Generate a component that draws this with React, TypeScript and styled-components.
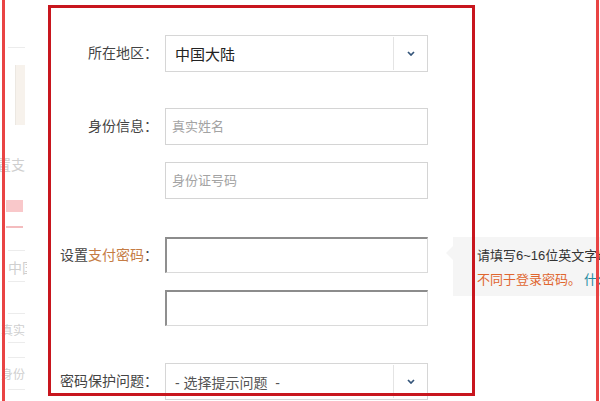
import styled, { createGlobalStyle } from "styled-components";

const GlobalStyle = createGlobalStyle`
  html, body {
    margin: 0;
    padding: 0;
    background: #fff;
  }
  body {
    font-family: "Liberation Sans", "Noto Sans CJK SC", sans-serif;
  }
`;

const Page = styled.div`
  position: relative;
  width: 600px;
  height: 401px;
  overflow: hidden;
  display: flex;
  background: #fff;
  color: #444;
`;

/* annotation marks drawn over the page */
const OuterMark = styled.div`
  position: absolute;
  left: 2px;
  right: 1px;
  top: -10px;
  bottom: -10px;
  border: 3px solid #e94444;
  pointer-events: none;
`;

const FocusMark = styled.div`
  position: absolute;
  left: 48px;
  top: 5px;
  width: 427px;
  height: 391px;
  box-sizing: border-box;
  border: 3px solid #c8161e;
  pointer-events: none;
`;

/* faded column on the left */
const Side = styled.div`
  width: 27px;
  flex-shrink: 0;
  box-sizing: border-box;
  padding: 0 2px 0 6px;
  overflow: hidden;
  display: flex;
  flex-direction: column;
`;

const SideRule = styled.div<{ $top: number }>`
  margin-top: ${(p) => p.$top}px;
  margin-left: 2px;
  height: 1px;
  background: #ececec;
  flex-shrink: 0;
`;

const SideThumb = styled.div`
  margin-top: 17px;
  margin-left: 9px;
  width: 9px;
  height: 60px;
  background: #f7f2ec;
  border-left: 1px solid #ece8e2;
  flex-shrink: 0;
`;

const SideText = styled.div<{ $top: number; $size: number; $end?: boolean }>`
  margin-top: ${(p) => p.$top}px;
  display: flex;
  justify-content: ${(p) => (p.$end ? "flex-end" : "flex-start")};
  padding-left: ${(p) => (p.$end ? 0 : 2)}px;
  font-size: ${(p) => p.$size}px;
  line-height: ${(p) => p.$size}px;
  color: #cfcfcf;
  white-space: nowrap;
  flex-shrink: 0;
`;

const SideTab = styled.div`
  margin-top: 28px;
  width: 17px;
  height: 12px;
  background: #f9c8ca;
  flex-shrink: 0;
`;

const SideUnderline = styled.div`
  margin-top: 14px;
  width: 17px;
  height: 2px;
  background: #f4bcbe;
  flex-shrink: 0;
`;

/* the form */
const Form = styled.div`
  flex: 1;
  padding-top: 35px;
  display: flex;
  flex-direction: column;
`;

const Group = styled.div<{ $after?: number }>`
  display: grid;
  grid-template-columns: 131px 263px 1fr;
  column-gap: 7px;
  margin-bottom: ${(p) => p.$after ?? 0}px;
`;

const Label = styled.div`
  text-align: right;
  font-size: 14px;
  line-height: 37px;
  color: #444;
  white-space: nowrap;
`;

const Accent = styled.span`
  color: #c57c45;
`;

const Fields = styled.div`
  display: flex;
  flex-direction: column;
  gap: 17px;
`;

const SelectBox = styled.div`
  height: 37px;
  box-sizing: border-box;
  border: 1px solid #d6d6d6;
  display: flex;
  align-items: center;
  background: #fff;
`;

const SelectValue = styled.div<{ $muted?: boolean }>`
  flex: 1;
  padding-left: 9px;
  font-size: ${(p) => (p.$muted ? 14 : 15)}px;
  color: ${(p) => (p.$muted ? "#555" : "#222")};
  white-space: pre;
`;

const SelectArrow = styled.div`
  width: 33px;
  height: 33px;
  border-left: 1px solid #e4e4e4;
  display: flex;
  align-items: center;
  justify-content: center;
`;

const TextField = styled.input`
  height: 37px;
  box-sizing: border-box;
  border: 1px solid #d4d4d4;
  padding: 0 0 0 6px;
  margin: 0;
  font-family: inherit;
  font-size: 13px;
  outline: none;
  &::placeholder {
    color: #a3a3a3;
  }
`;

const PasswordField = styled.input`
  height: 36px;
  box-sizing: border-box;
  border-style: solid;
  border-width: 2px 1px 1px 2px;
  border-color: #8c8c8c #dadada #dadada #8f8f8f;
  padding: 0;
  margin: 0;
  outline: none;
`;

const Aside = styled.div`
  min-width: 0;
`;

const Tip = styled.div`
  position: relative;
  margin-left: 18px;
  height: 59px;
  box-sizing: border-box;
  padding: 7px 0 0 24px;
  background: #f5f5f5;
  font-size: 13px;
  line-height: 24px;
  color: #333;
  white-space: nowrap;

  &::before {
    content: "";
    position: absolute;
    left: -7px;
    top: 9px;
    border-top: 7px solid transparent;
    border-bottom: 7px solid transparent;
    border-right: 7px solid #f5f5f5;
  }
`;

const Warn = styled.span`
  color: #e0662f;
`;

const TipLink = styled.span`
  color: #21889e;
  margin-left: 3px;
`;

const Chevron = () => (
  <svg width="8" height="5" viewBox="0 0 8 5">
    <polyline points="1,1 4,4 7,1" fill="none" stroke="#34557a" strokeWidth="1.7" />
  </svg>
);

export default function App() {
  return (
    <>
      <GlobalStyle />
      <Page>
        <Side>
          <SideRule $top={47} />
          <SideThumb />
          <SideText $top={33} $size={14} $end>
            设置支
          </SideText>
          <SideTab />
          <SideUnderline />
          <SideRule $top={22} />
          <SideText $top={10} $size={14}>
            中国
          </SideText>
          <SideRule $top={6} />
          <SideRule $top={31} />
          <SideText $top={11} $size={12} $end>
            真实
          </SideText>
          <SideRule $top={5} />
          <SideRule $top={14} />
          <SideText $top={11} $size={12} $end>
            身份
          </SideText>
          <SideRule $top={8} />
        </Side>

        <Form>
          <Group $after={36}>
            <Label>所在地区：</Label>
            <Fields>
              <SelectBox>
                <SelectValue>中国大陆</SelectValue>
                <SelectArrow>
                  <Chevron />
                </SelectArrow>
              </SelectBox>
            </Fields>
            <Aside />
          </Group>

          <Group $after={38}>
            <Label>身份信息：</Label>
            <Fields>
              <TextField placeholder="真实姓名" />
              <TextField placeholder="身份证号码" />
            </Fields>
            <Aside />
          </Group>

          <Group $after={37}>
            <Label>
              设置<Accent>支付密码</Accent>：
            </Label>
            <Fields>
              <PasswordField type="password" />
              <PasswordField type="password" />
            </Fields>
            <Aside>
              <Tip>
                <div>请填写6~16位英文字母、数字或符号，</div>
                <div>
                  <Warn>不同于登录密码。</Warn>
                  <TipLink>什么是支付密码？</TipLink>
                </div>
              </Tip>
            </Aside>
          </Group>

          <Group>
            <Label>密码保护问题：</Label>
            <Fields>
              <SelectBox>
                <SelectValue $muted>{"- 选择提示问题  -"}</SelectValue>
                <SelectArrow>
                  <Chevron />
                </SelectArrow>
              </SelectBox>
            </Fields>
            <Aside />
          </Group>
        </Form>

        <OuterMark />
        <FocusMark />
      </Page>
    </>
  );
}
